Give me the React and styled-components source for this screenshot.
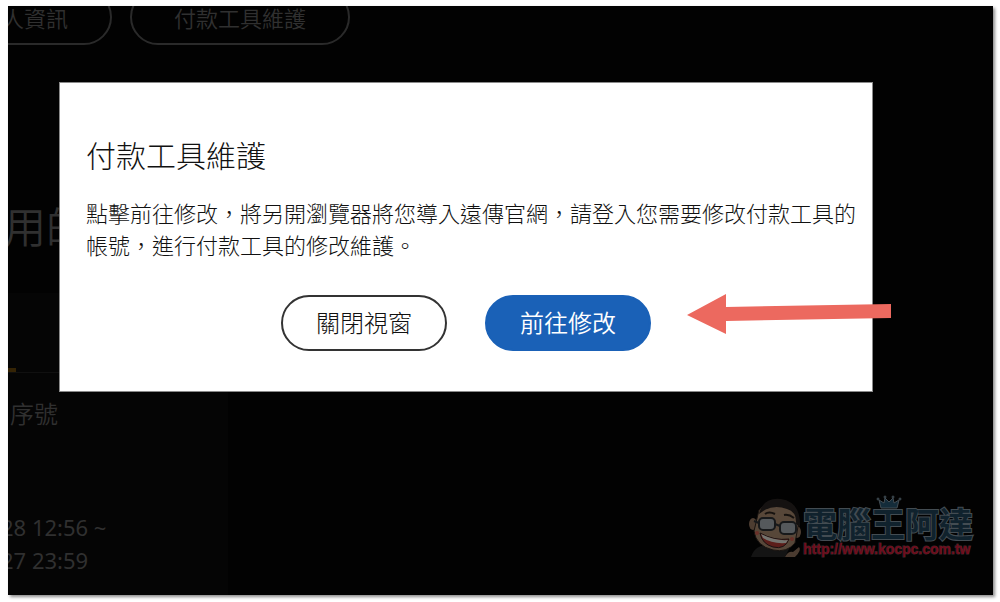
import styled, { createGlobalStyle } from "styled-components";

const GlobalStyle = createGlobalStyle`
  * {
    box-sizing: border-box;
  }

  body {
    margin: 0;
    background: #fff;
    font-family: "Noto Sans", "Noto Sans CJK TC", sans-serif;
  }
`;

const Screen = styled.div`
  position: relative;
  min-height: calc(100vh - 13px);
  margin: 6px 7px 7px 8px;
  overflow: hidden;
  background: #020202;
  color: #303030;
  box-shadow: 2px 2px 3px rgba(0, 0, 0, 0.45);
`;

const Frame = styled.div`
  display: flow-root;
`;

// 背景頁面
const Tabs = styled.nav`
  display: flex;
  align-items: flex-end;
  gap: 18px;
  height: 39px;
  margin-left: -72px;
`;

const Tab = styled.button`
  flex: none;
  height: 56px;
  padding: 0 42px;
  border: 2px solid #2a2a2a;
  border-radius: 28px;
  background: transparent;
  color: #303030;
  font: 350 22px/32px "Noto Sans CJK TC", sans-serif;
`;

const Heading = styled.h1`
  margin: 156px 0 44px -4px;
  font: 350 42px/48px "Noto Sans CJK TC", sans-serif;
`;

const Card = styled.section`
  width: 220px;
  height: 302px;
  background: #050505;
`;

const CardTabs = styled.div`
  height: 80px;
  padding-top: 75px;
  border-bottom: 1px solid #101010;

  &::before {
    content: "";
    display: block;
    width: 8px;
    height: 4px;
    background: #352405;
  }
`;

const Label = styled.h3`
  margin: 0;
  padding: 24px 0 82px 2px;
  font: 350 24px/32px "Noto Sans CJK TC", sans-serif;
`;

const Period = styled.p`
  margin: 0 0 0 -7px;
  font-size: 22px;
  line-height: 33px;
`;

// 彈出視窗
const Overlay = styled.div`
  position: absolute;
  inset: 0;
  padding: 76px 120px 0 51px;
`;

const Modal = styled.div`
  position: relative;
  padding: 49px 0 40px;
  border: 1px solid #8a8a8a;
  background: #fff;
  color: #111;
`;

const ModalBody = styled.div`
  padding: 0 12px 0 26px;
`;

const ModalTitle = styled.h2`
  margin: 0 0 20px;
  font: 300 30px/44px "Noto Sans CJK TC", sans-serif;
`;

const ModalText = styled.p`
  margin: 0;
  font: 300 22px/32px "Noto Sans CJK TC", sans-serif;
`;

const Actions = styled.div`
  display: flex;
  justify-content: center;
  gap: 38px;
  margin-top: 35px;
`;

const Button = styled.button`
  width: 166px;
  height: 56px;
  padding: 0 0 2px;
  border: 2px solid ${(props) => (props.$primary ? "#1a61b7" : "#333")};
  border-radius: 28px;
  background: ${(props) => (props.$primary ? "#1a61b7" : "#fff")};
  color: ${(props) => (props.$primary ? "#fff" : "#111")};
  font: ${(props) => (props.$primary ? 350 : 300)} 24px/32px "Noto Sans CJK TC",
    sans-serif;
`;

const Arrow = styled.svg`
  position: absolute;
  top: 210px;
  right: -20px;
`;

// 浮水印
const Watermark = styled.div`
  position: absolute;
  right: 20px;
  bottom: 38px;
  display: flex;
  align-items: flex-end;
`;

const Brand = styled.div`
  position: relative;
  display: flex;
  flex-direction: column;
`;

const BrandName = styled.span`
  color: #10222d;
  font: 700 34px/36px "Noto Sans CJK TC", sans-serif;
  -webkit-text-stroke: 2px #434c52;
  paint-order: stroke fill;
`;

const BrandUrl = styled.span`
  color: #6f0c1c;
  font: 700 14px/16px "Liberation Sans", sans-serif;
  -webkit-text-stroke: 1px #3a2a2d;
  paint-order: stroke fill;
`;

const Crown = styled.svg`
  position: absolute;
  top: -10px;
  left: 73px;
`;

function Face() {
  return (
    <svg width="54" height="60" viewBox="0 0 54 60" aria-hidden="true">
      <path d="M2 60Q4 52 12 49L40 52L36 60Z" fill="#141414" />
      <path d="M36 60Q39 54 44 55L50 50Q53 53 46 60Z" fill="#4a3b30" />
      <ellipse cx="4" cy="27" rx="4" ry="6" fill="#4d3d31" />
      <ellipse cx="48" cy="35" rx="4" ry="6" fill="#4d3d31" />
      <path
        d="M10 13Q18 4 33 6Q49 9 50 24L46 46Q38 56 24 53Q7 49 5 34Z"
        fill="#574739"
        stroke="#181310"
      />
      <path d="M10 17Q14 0 32 2Q52 5 51 30L47 27Q48 15 38 12Q23 6 10 17Z" fill="#151211" />
      <path d="M16 17Q20 14 26 17M35 18Q40 17 45 21" fill="none" stroke="#16120f" strokeWidth="2" />
      <rect x="10" y="21" width="16" height="12" rx="4" fill="#55595c" stroke="#17191b" strokeWidth="2" />
      <rect x="31" y="25" width="16" height="12" rx="4" fill="#55595c" stroke="#17191b" strokeWidth="2" />
      <path d="M26 27L31 29M5 24L10 26" stroke="#17191b" strokeWidth="2" />
      <circle cx="8" cy="36" r="2" fill="#6a3029" />
      <circle cx="43" cy="42" r="2" fill="#6a3029" />
      <path d="M11 36Q25 44 40 42Q36 53 24 50Q13 47 11 36Z" fill="#5c1e1a" stroke="#1a1010" />
      <path d="M12 37Q26 44 39 43L37 46Q23 47 14 41Z" fill="#74746f" />
    </svg>
  );
}

function App() {
  return (
    <Frame>
      <GlobalStyle />
      <Screen>
        <Tabs>
          <Tab type="button">個人資訊</Tab>
          <Tab type="button">付款工具維護</Tab>
        </Tabs>
        <Heading>用的</Heading>
        <Card>
          <CardTabs />
          <Label>序號</Label>
          <Period>
            28 12:56 ~<br />
            27 23:59
          </Period>
        </Card>

        <Overlay>
          <Modal role="dialog" aria-labelledby="modal-title">
            <ModalBody>
              <ModalTitle id="modal-title">付款工具維護</ModalTitle>
              <ModalText>
                點擊前往修改，將另開瀏覽器將您導入遠傳官網，請登入您需要修改付款工具的帳號，進行付款工具的修改維護。
              </ModalText>
            </ModalBody>
            <Actions>
              <Button type="button">關閉視窗</Button>
              <Button type="button" $primary>
                前往修改
              </Button>
            </Actions>
            <Arrow width="206" height="42" viewBox="0 0 206 42" aria-hidden="true">
              <path d="M1 22L40 1V14L205 11V25L40 28V41Z" fill="#ec695f" />
            </Arrow>
          </Modal>
        </Overlay>

        <Watermark>
          <Face />
          <Brand>
            <Crown width="26" height="14" viewBox="0 0 26 14" aria-hidden="true">
              <path
                d="M5 13L3 5L8 8L9 3L13 7L17 3L18 8L23 5L21 13Z"
                fill="#142c3a"
                stroke="#434c52"
              />
              <g fill="#142c3a" stroke="#434c52">
                <circle cx="2" cy="4" r="1" />
                <circle cx="9" cy="2" r="1" />
                <circle cx="17" cy="2" r="1" />
                <circle cx="24" cy="4" r="1" />
              </g>
            </Crown>
            <BrandName>電腦王阿達</BrandName>
            <BrandUrl>http://www.kocpc.com.tw</BrandUrl>
          </Brand>
        </Watermark>
      </Screen>
    </Frame>
  );
}

export default App;
